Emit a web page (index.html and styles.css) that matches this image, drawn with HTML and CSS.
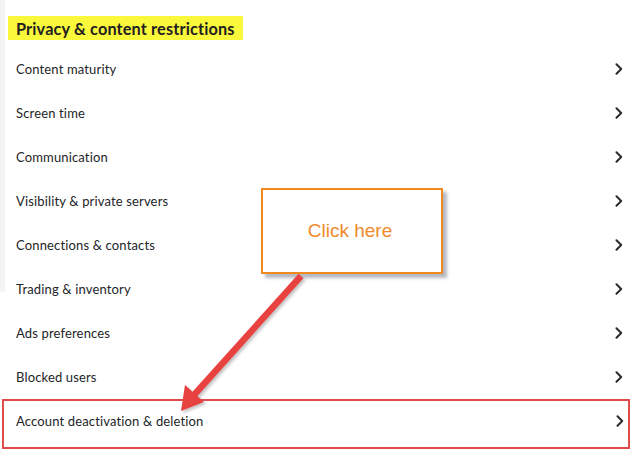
FILE: index.html
```html
<!DOCTYPE html>
<html lang="en">
<head>
<meta charset="utf-8">
<title>Privacy &amp; content restrictions</title>
<link rel="stylesheet" href="styles.css">
</head>
<body>
<div class="page">
  <h2 class="title">Privacy &amp; content restrictions</h2>
  <ul class="list">
    <li class="row"><span>Content maturity</span><svg class="chev" viewBox="0 0 8 12"><path d="M1.5 1.2 6.2 6 1.5 10.8"/></svg></li>
    <li class="row"><span>Screen time</span><svg class="chev" viewBox="0 0 8 12"><path d="M1.5 1.2 6.2 6 1.5 10.8"/></svg></li>
    <li class="row"><span>Communication</span><svg class="chev" viewBox="0 0 8 12"><path d="M1.5 1.2 6.2 6 1.5 10.8"/></svg></li>
    <li class="row"><span>Visibility &amp; private servers</span><svg class="chev" viewBox="0 0 8 12"><path d="M1.5 1.2 6.2 6 1.5 10.8"/></svg></li>
    <li class="row"><span>Connections &amp; contacts</span><svg class="chev" viewBox="0 0 8 12"><path d="M1.5 1.2 6.2 6 1.5 10.8"/></svg></li>
    <li class="row"><span>Trading &amp; inventory</span><svg class="chev" viewBox="0 0 8 12"><path d="M1.5 1.2 6.2 6 1.5 10.8"/></svg></li>
    <li class="row"><span>Ads preferences</span><svg class="chev" viewBox="0 0 8 12"><path d="M1.5 1.2 6.2 6 1.5 10.8"/></svg></li>
    <li class="row"><span>Blocked users</span><svg class="chev" viewBox="0 0 8 12"><path d="M1.5 1.2 6.2 6 1.5 10.8"/></svg></li>
    <li class="row row-marked"><span>Account deactivation &amp; deletion</span><svg class="chev" viewBox="0 0 8 12"><path d="M1.5 1.2 6.2 6 1.5 10.8"/></svg></li>
  </ul>
  <div class="callout">Click here</div>
  <svg class="arrow" viewBox="0 0 640 466" width="640" height="466">
    <defs>
      <filter id="sh" x="-20%" y="-20%" width="140%" height="140%">
        <feDropShadow dx="2" dy="2" stdDeviation="1.5" flood-color="#7a7a7a" flood-opacity="0.45"/>
      </filter>
    </defs>
    <g filter="url(#sh)">
      <line x1="301" y1="276" x2="194" y2="395" stroke="#e8423f" stroke-width="6.5"/>
      <polygon points="181,411 185,385 204,402" fill="#e8423f"/>
    </g>
  </svg>
</div>
</body>
</html>
```

FILE: styles.css
```css
html, body {
  margin: 0;
  padding: 0;
  background: #ffffff;
}
body {
  width: 640px;
  height: 466px;
  overflow: hidden;
  background-image: linear-gradient(#f3f4f5, #f3f4f5);
  background-size: 5px 292px;
  background-repeat: no-repeat;
  font-family: "Lato", "Open Sans", sans-serif;
  color: #232527;
}
.page {
  position: relative;
  width: 640px;
  height: 466px;
  padding-left: 16px;
  box-sizing: border-box;
}
.title {
  display: inline-block;
  margin: 16px 0 7px -8px;
  padding: 0 8px;
  height: 24px;
  line-height: 25px;
  font-size: 16.3px;
  font-weight: 700;
  background: #f9f83a;
  color: #1f2022;
  letter-spacing: 0.15px;
}
.list {
  list-style: none;
  margin: 0;
  padding: 0;
}
.row {
  display: flex;
  align-items: center;
  justify-content: space-between;
  height: 44px;
  padding-right: 17px;
  font-size: 13px;
  letter-spacing: 0.15px;
}
.chev {
  width: 8px;
  height: 12px;
  fill: none;
  stroke: #2a2c2f;
  stroke-width: 2;
  stroke-linecap: round;
  stroke-linejoin: round;
}
.row-marked {
  margin-left: -14px;
  margin-right: 10px;
  padding-left: 12px;
  padding-right: 4px;
  padding-bottom: 6px;
  height: 50px;
  box-sizing: border-box;
  border: 2px solid #e04b4b;
}
.callout {
  position: absolute;
  left: 261px;
  top: 188px;
  width: 182px;
  height: 86px;
  box-sizing: border-box;
  border: 2px solid #f08a1e;
  background: #ffffff;
  box-shadow: 4px 4px 3px rgba(90, 100, 120, 0.45);
  display: flex;
  align-items: center;
  justify-content: center;
  padding-right: 4px;
  font-family: "Liberation Sans", Arial, sans-serif;
  font-size: 19px;
  color: #ee8a2a;
}
.arrow {
  position: absolute;
  left: 0;
  top: 0;
  pointer-events: none;
}
```
